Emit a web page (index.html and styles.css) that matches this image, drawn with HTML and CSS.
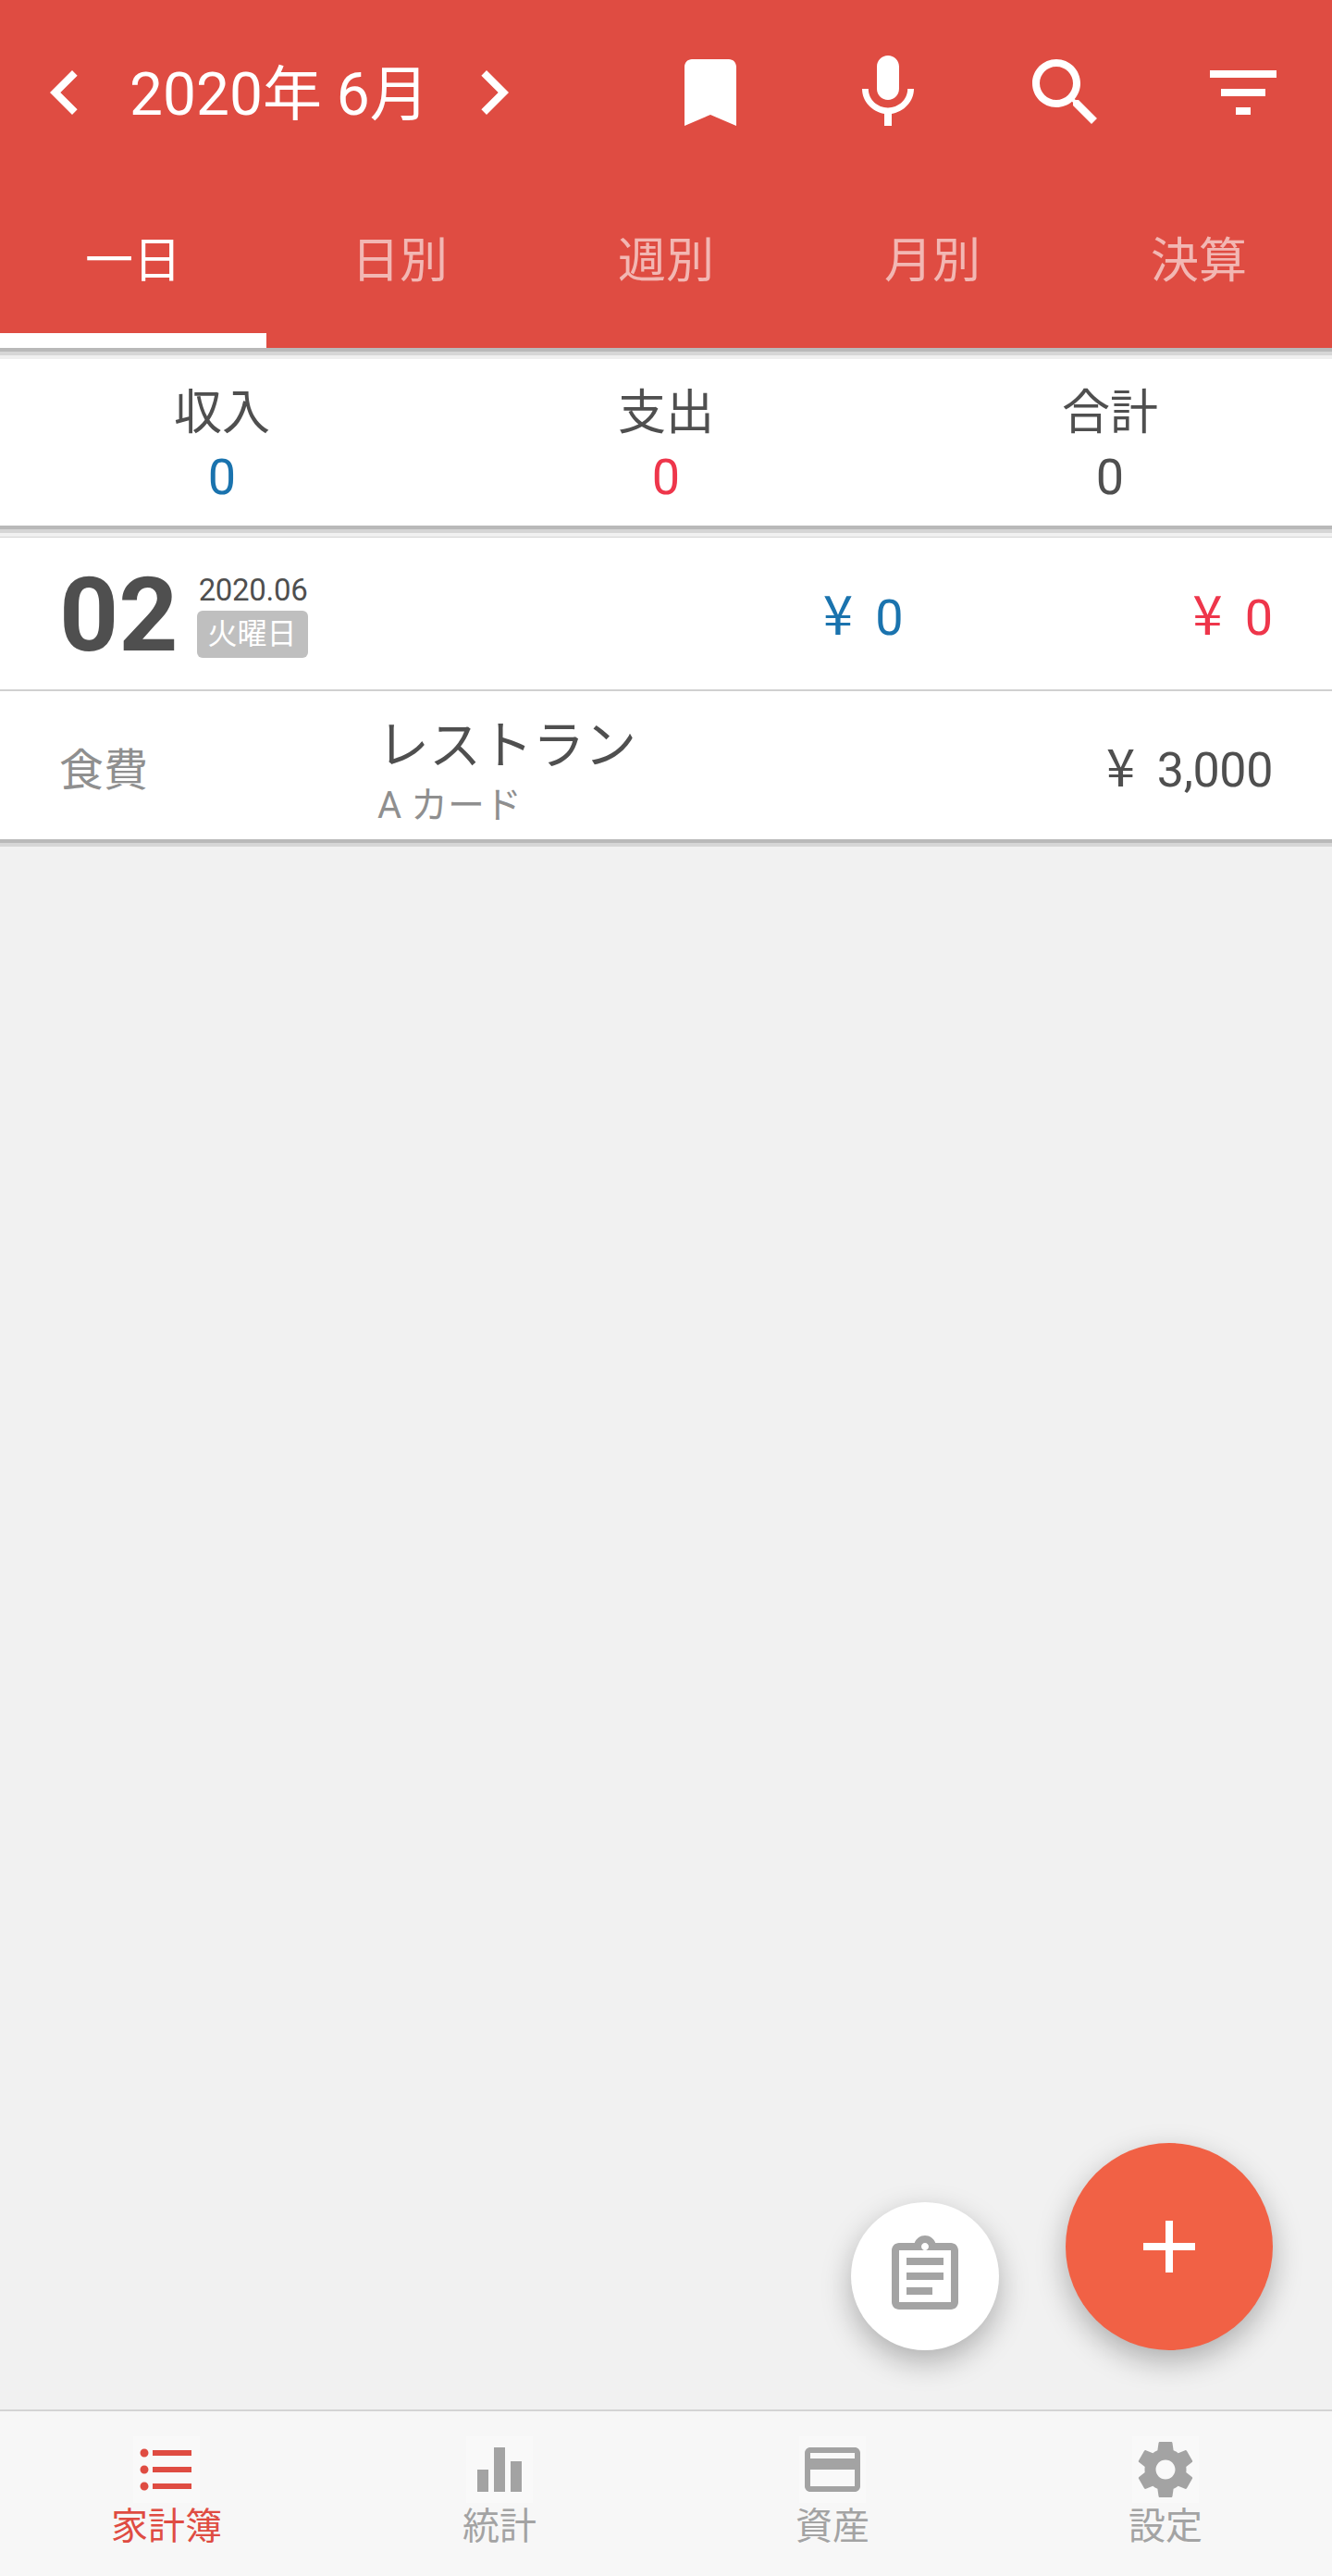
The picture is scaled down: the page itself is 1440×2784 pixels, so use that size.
FILE: index.html

```html
<!DOCTYPE html>
<html lang="ja">
<head>
    <meta charset="UTF-8">
    <meta name="viewport" content="width=device-width, initial-scale=1.0">
    <title>家計簿</title>
    <link rel="stylesheet" href="styles.css">
</head>
<body>
    <div class="app">
        <header class="header">
            <div class="toolbar">
                <div class="month">
                    <svg class="icon" viewBox="0 0 24 24"><path d="M15.41 7.41L14 6l-6 6 6 6 1.41-1.41L10.83 12z"/></svg>
                    <span class="month-text">2020年 6月</span>
                    <svg class="icon" viewBox="0 0 24 24"><path d="M10 6L8.59 7.41 13.17 12l-4.58 4.59L10 18l6-6z"/></svg>
                </div>
                <div class="actions">
                    <svg class="icon" viewBox="0 0 24 24"><path d="M17 3H7c-1.1 0-2 .9-2 2v16l7-3 7 3V5c0-1.1-.9-2-2-2z"/></svg>
                    <svg class="icon" viewBox="0 0 24 24"><path d="M12 14c1.66 0 2.99-1.34 2.99-3L15 5c0-1.66-1.34-3-3-3S9 3.34 9 5v6c0 1.66 1.34 3 3 3zm5.3-3c0 3-2.54 5.1-5.3 5.1S6.7 14 6.7 11H5c0 3.41 2.72 6.23 6 6.72V21h2v-3.28c3.28-.48 6-3.3 6-6.72h-1.7z"/></svg>
                    <svg class="icon" viewBox="0 0 24 24"><path d="M15.5 14h-.79l-.28-.27C15.41 12.59 16 11.11 16 9.5 16 5.91 13.09 3 9.5 3S3 5.91 3 9.5 5.91 16 9.5 16c1.61 0 3.09-.59 4.23-1.57l.27.28v.79l5 4.99L20.49 19l-4.99-5zm-6 0C7.01 14 5 11.99 5 9.5S7.01 5 9.5 5 14 7.01 14 9.5 11.99 14 9.5 14z"/></svg>
                    <svg class="icon" viewBox="0 0 24 24"><path d="M10 18h4v-2h-4v2zM3 6v2h18V6H3zm3 7h12v-2H6v2z"/></svg>
                </div>
            </div>
            <nav class="tabs">
                <div class="tab active">一日</div>
                <div class="tab">日別</div>
                <div class="tab">週別</div>
                <div class="tab">月別</div>
                <div class="tab">決算</div>
            </nav>
        </header>
        <div class="shadow"></div>

        <main class="main">
            <section class="summary">
                <div class="summary-item">
                    <div class="summary-label">収入</div>
                    <div class="summary-value blue">0</div>
                </div>
                <div class="summary-item">
                    <div class="summary-label">支出</div>
                    <div class="summary-value red">0</div>
                </div>
                <div class="summary-item">
                    <div class="summary-label">合計</div>
                    <div class="summary-value">0</div>
                </div>
            </section>
            <div class="shadow shadow-short"></div>

            <section class="day">
                <div class="day-head">
                    <div class="day-num">02</div>
                    <div class="day-meta">
                        <div class="day-month">2020.06</div>
                        <div class="day-badge">火曜日</div>
                    </div>
                    <div class="day-income blue"><span class="yen">¥</span>0</div>
                    <div class="day-expense red"><span class="yen">¥</span>0</div>
                </div>
                <div class="entry">
                    <div class="entry-cat">食費</div>
                    <div class="entry-body">
                        <div class="entry-name">レストラン</div>
                        <div class="entry-account">A カード</div>
                    </div>
                    <div class="entry-amount"><span class="yen">¥</span>3,000</div>
                </div>
            </section>
            <div class="shadow shadow-short"></div>

            <button class="fab fab-small">
                <svg class="icon-grey" viewBox="0 0 24 24"><path d="M19 3h-4.18C14.4 1.84 13.3 1 12 1c-1.3 0-2.4.84-2.82 2H5c-1.1 0-2 .9-2 2v14c0 1.1.9 2 2 2h14c1.1 0 2-.9 2-2V5c0-1.1-.9-2-2-2zm-7 0c.55 0 1 .45 1 1s-.45 1-1 1-1-.45-1-1 .45-1 1-1zm7 16H5V5h14v14z"/><path d="M7 7h10v2H7zM7 11h10v2H7zM7 15h7v2H7z"/></svg>
            </button>
            <button class="fab fab-add">
                <svg class="icon" viewBox="0 0 24 24"><path d="M19 13h-6v6h-2v-6H5v-2h6V5h2v6h6v2z"/></svg>
            </button>
        </main>

        <footer class="bottom-nav">
            <div class="nav-item active">
                <svg class="nav-icon" viewBox="0 0 24 24"><path d="M4 10.5c-.83 0-1.5.67-1.5 1.5s.67 1.5 1.5 1.5 1.5-.67 1.5-1.5-.67-1.5-1.5-1.5zm0-6c-.83 0-1.5.67-1.5 1.5S3.17 7.5 4 7.5 5.5 6.83 5.5 6 4.83 4.5 4 4.5zm0 12c-.83 0-1.5.68-1.5 1.5s.68 1.5 1.5 1.5 1.5-.68 1.5-1.5-.67-1.5-1.5-1.5zM7 19h14v-2H7v2zm0-6h14v-2H7v2zm0-8v2h14V5H7z"/></svg>
                <div class="nav-label">家計簿</div>
            </div>
            <div class="nav-item">
                <svg class="nav-icon" viewBox="0 0 24 24"><path d="M10 20h4V4h-4v16zm-6 0h4v-8H4v8zM16 9v11h4V9h-4z"/></svg>
                <div class="nav-label">統計</div>
            </div>
            <div class="nav-item">
                <svg class="nav-icon" viewBox="0 0 24 24"><path d="M20 4H4c-1.11 0-1.99.89-1.99 2L2 18c0 1.11.89 2 2 2h16c1.11 0 2-.89 2-2V6c0-1.11-.89-2-2-2zm0 14H4v-6h16v6zm0-10H4V6h16v2z"/></svg>
                <div class="nav-label">資産</div>
            </div>
            <div class="nav-item">
                <svg class="nav-icon" viewBox="0 0 24 24"><path d="M19.43 12.98c.04-.32.07-.64.07-.98s-.03-.66-.07-.98l2.11-1.65c.19-.15.24-.42.12-.64l-2-3.46c-.12-.22-.39-.3-.61-.22l-2.49 1c-.52-.4-1.08-.73-1.69-.98l-.38-2.65C14.46 2.18 14.25 2 14 2h-4c-.25 0-.46.18-.49.42l-.38 2.65c-.61.25-1.17.59-1.69.98l-2.49-1c-.23-.09-.49 0-.61.22l-2 3.46c-.13.22-.07.49.12.64l2.11 1.65c-.04.32-.07.65-.07.98s.03.66.07.98l-2.11 1.65c-.19.15-.24.42-.12.64l2 3.46c.12.22.39.3.61.22l2.49-1c.52.4 1.08.73 1.69.98l.38 2.65c.03.24.24.42.49.42h4c.25 0 .46-.18.49-.42l.38-2.65c.61-.25 1.17-.59 1.69-.98l2.49 1c.23.09.49 0 .61-.22l2-3.46c.12-.22.07-.49-.12-.64l-2.11-1.65zM12 15.5c-1.93 0-3.5-1.57-3.5-3.5s1.57-3.5 3.5-3.5 3.5 1.57 3.5 3.5-1.57 3.5-3.5 3.5z"/></svg>
                <div class="nav-label">設定</div>
            </div>
        </footer>
    </div>
</body>
</html>
```

FILE: styles.css

```css
* {
    box-sizing: border-box;
}
body {
    margin: 0;
    font-family: Roboto, "Noto Sans CJK JP", sans-serif;
    font-weight: 400;
    color: #4f4f4f;
    background-color: #f1f1f1;
}
.app {
    width: 1440px;
    height: 2784px;
    display: flex;
    flex-direction: column;
    overflow: hidden;
}
.blue {
    color: #1a73ae;
}
.red {
    color: #ee364b;
}
.icon {
    width: 96px;
    height: 96px;
    fill: #fff;
    flex: none;
}

/* header */
.header {
    height: 376px;
    background-color: #df4c42;
    color: #fff;
    padding-top: 52px;
}
.toolbar {
    height: 96px;
    padding-left: 22px;
    padding-right: 48px;
    display: flex;
    justify-content: space-between;
}
.month {
    display: flex;
    align-items: center;
}
.month-text {
    width: 368px;
    padding-left: 22px;
    padding-top: 6px;
    font-size: 64px;
    line-height: 90px;
    white-space: nowrap;
}
.actions {
    display: flex;
    gap: 96px;
}
.tabs {
    display: flex;
    margin-top: 52px;
}
.tab {
    width: 288px;
    height: 176px;
    padding-top: 47px;
    text-align: center;
    font-size: 52px;
    line-height: 72px;
    color: rgba(255, 255, 255, 0.6);
}
.tab.active {
    color: #fff;
    border-bottom: 16px solid #fff;
}

.shadow {
    height: 12px;
    background: linear-gradient(#b9b9b9 0, #b9b9b9 4px, #d6d6d6 4px, #d6d6d6 8px, #efefef 8px);
}
.shadow-short {
    height: 8px;
    background: linear-gradient(#b9b9b9 0, #b9b9b9 4px, #d6d6d6 4px);
}

.main {
    flex: 1;
    position: relative;
}

/* income / expense summary */
.summary {
    height: 180px;
    background-color: #fff;
    display: flex;
}
.summary-item {
    flex: 1;
    padding-top: 21px;
    text-align: center;
}
.summary-label {
    font-size: 52px;
    line-height: 75px;
}
.summary-value {
    font-size: 54px;
    line-height: 64px;
}

/* day block */
.day {
    margin-top: 4px;
    border-top: 1px solid #d5d5d5;
    background-color: #fff;
}
.day-head {
    height: 166px;
    padding-top: 4px;
    padding-left: 64px;
    padding-right: 64px;
    border-bottom: 2px solid #d0d0d0;
    display: flex;
    align-items: center;
}
.day-num {
    font-size: 112px;
    font-weight: 700;
    line-height: 112px;
}
.day-meta {
    margin-left: 20px;
    width: 120px;
}
.day-month {
    font-size: 33px;
    letter-spacing: -0.3px;
    line-height: 36px;
    text-align: right;
}
.day-badge {
    height: 51px;
    margin-top: 4px;
    background-color: #bfbfbf;
    border-radius: 6px;
    color: #fff;
    font-size: 32px;
    line-height: 50px;
    text-align: center;
}
.day-income,
.day-expense {
    padding-bottom: 2px;
    font-size: 54px;
    line-height: 64px;
    white-space: nowrap;
}
.day-income {
    width: 644px;
    text-align: right;
}
.day-expense {
    flex: 1;
    text-align: right;
}
.yen {
    margin-right: 24px;
    font-family: "Noto Sans CJK JP", sans-serif;
    font-size: 1.08em;
}

/* entry row */
.entry {
    height: 160px;
    padding-left: 64px;
    padding-right: 64px;
    display: flex;
    align-items: center;
}
.entry-cat {
    width: 344px;
    padding-top: 2px;
    font-size: 48px;
    color: #8f8f8f;
}
.entry-body {
    flex: 1;
    padding-top: 6px;
}
.entry-name {
    font-size: 56px;
    line-height: 82px;
}
.entry-account {
    font-size: 40px;
    line-height: 48px;
    color: #8f8f8f;
}
.entry-amount {
    padding-top: 5px;
    font-size: 52px;
    letter-spacing: -0.4px;
    line-height: 64px;
    white-space: nowrap;
}

/* floating buttons */
.fab {
    position: absolute;
    border: 0;
    padding: 0;
    border-radius: 50%;
    display: flex;
    align-items: center;
    justify-content: center;
    box-shadow: 0 12px 32px rgba(0, 0, 0, 0.28);
}
.fab-small {
    left: 920px;
    bottom: 64px;
    width: 160px;
    height: 160px;
    background-color: #fff;
}
.fab-add {
    left: 1152px;
    bottom: 64px;
    width: 224px;
    height: 224px;
    background-color: #f16145;
}
.icon-grey {
    width: 96px;
    height: 96px;
    fill: #a4a4a4;
}

/* bottom navigation */
.bottom-nav {
    height: 180px;
    border-top: 2px solid #d4d4d4;
    background-color: #f7f7f7;
    display: flex;
}
.nav-item {
    flex: 1;
    padding-top: 27px;
    display: flex;
    flex-direction: column;
    align-items: center;
    color: #a3a3a3;
}
.nav-item.active {
    color: #df4c42;
}
.nav-icon {
    width: 72px;
    height: 72px;
    fill: currentColor;
    background-color: #f9f9f9;
}
.nav-label {
    font-size: 40px;
    line-height: 52px;
}
```
